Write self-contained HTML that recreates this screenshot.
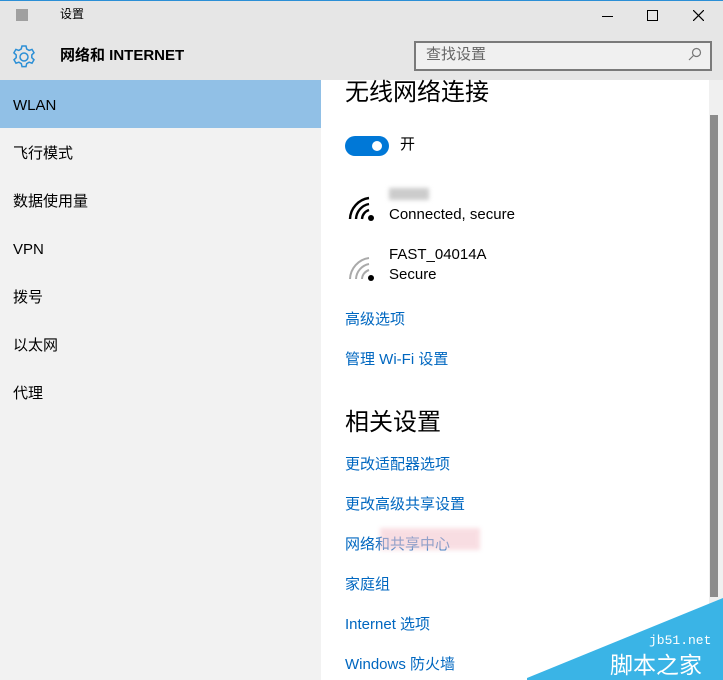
<html><head><style>
body{margin:0;width:723px;height:680px;overflow:hidden;font-family:"Liberation Sans","Noto Sans CJK SC",sans-serif;background:#fff;position:relative;line-height:1.45}
.a{position:absolute}
.nav{font-size:15px;color:#000;left:13px}
.lk{color:#0067c0;font-size:15px;left:345px}
</style></head><body>
<div class="a" style="left:0;top:0;width:723px;height:80px;background:#e6e6e6"></div>
<div class="a" style="left:0;top:0;width:723px;height:1px;background:#2b8fd6"></div>
<div class="a" style="left:16px;top:9px;width:12px;height:12px;background:#a0a0a0"></div>
<div class="a" style="left:60px;top:6px;font-size:12px">设置</div>
<div class="a" style="left:602px;top:16px;width:11px;height:1px;background:#000"></div>
<div class="a" style="left:647px;top:10px;width:9px;height:9px;border:1px solid #000"></div>
<svg class="a" style="left:693px;top:10px" width="11" height="11"><path d="M0 0L11 11M11 0L0 11" stroke="#000" stroke-width="1.2"/></svg>
<svg class="a" style="left:10px;top:43px" width="28" height="28" viewBox="0 0 28 28"><g fill="none" stroke="#2b8fd6" stroke-width="1.5"><circle cx="14" cy="14" r="4"/><path d="M12 3h4l.7 3 2.4 1.4 2.9-1 2 3.4-2.2 2.1v2.8l2.2 2.1-2 3.4-2.9-1-2.4 1.4-.7 3h-4l-.7-3-2.4-1.4-2.9 1-2-3.4 2.2-2.1v-2.8L3.9 9.8l2-3.4 2.9 1 2.4-1.4z"/></g></svg>
<div class="a" style="left:60px;top:45px;font-size:15px;font-weight:bold">网络和 INTERNET</div>
<div class="a" style="left:414px;top:41px;width:294px;height:26px;border:2px solid #7a7a7a;background:#f0f0f0"></div>
<div class="a" style="left:426px;top:44px;font-size:15px;color:#666">查找设置</div>
<svg class="a" style="left:688px;top:47px" width="14" height="14"><circle cx="8.5" cy="5.5" r="4" fill="none" stroke="#777" stroke-width="1.2"/><path d="M5.5 8.5L1 13" stroke="#777" stroke-width="1.2"/></svg>
<div class="a" style="left:0;top:80px;width:321px;height:600px;background:#f2f2f2"></div>
<div class="a" style="left:0;top:80px;width:321px;height:48px;background:#91c0e6"></div>
<div class="a nav" style="top:95px">WLAN</div>
<div class="a nav" style="top:143px">飞行模式</div>
<div class="a nav" style="top:191px">数据使用量</div>
<div class="a nav" style="top:239px">VPN</div>
<div class="a nav" style="top:287px">拨号</div>
<div class="a nav" style="top:335px">以太网</div>
<div class="a nav" style="top:383px">代理</div>
<div class="a" style="left:345px;top:76px;font-size:24px">无线网络连接</div>
<div class="a" style="left:345px;top:136px;width:44px;height:20px;border-radius:10px;background:#0078d7"></div>
<div class="a" style="left:372px;top:141px;width:10px;height:10px;border-radius:5px;background:#fff"></div>
<div class="a" style="left:400px;top:134px;font-size:15px">开</div>
<svg class="a" style="left:347px;top:192px" width="30" height="30" viewBox="0 0 30 30"><g fill="none" stroke="#000" stroke-width="2.4"><path d="M3 27 A22 22 0 0 1 22 6"/><path d="M9 27 A16 16 0 0 1 22 12"/><path d="M15 27 A10 10 0 0 1 22 18"/></g><circle cx="24" cy="26" r="3" fill="#000"/></svg>
<div class="a" style="left:389px;top:188px;width:40px;height:12px;background:#ccc;filter:blur(2px)"></div>
<div class="a" style="left:389px;top:204px;font-size:15px">Connected, secure</div>
<svg class="a" style="left:347px;top:252px" width="30" height="30" viewBox="0 0 30 30"><g fill="none" stroke="#aaa" stroke-width="2"><path d="M3 27 A22 22 0 0 1 22 6"/><path d="M9 27 A16 16 0 0 1 22 12"/><path d="M15 27 A10 10 0 0 1 22 18"/></g><circle cx="24" cy="26" r="3" fill="#000"/></svg>
<div class="a" style="left:389px;top:244px;font-size:15px">FAST_04014A</div>
<div class="a" style="left:389px;top:264px;font-size:15px">Secure</div>
<div class="a lk" style="top:309px">高级选项</div>
<div class="a lk" style="top:349px">管理 Wi-Fi 设置</div>
<div class="a" style="left:345px;top:406px;font-size:24px">相关设置</div>
<div class="a lk" style="top:454px">更改适配器选项</div>
<div class="a lk" style="top:494px">更改高级共享设置</div>
<div class="a lk" style="top:534px">网络和共享中心</div>
<div class="a" style="left:380px;top:528px;width:100px;height:22px;background:#f5c8d0;opacity:.6;filter:blur(2px)"></div>
<div class="a lk" style="top:574px">家庭组</div>
<div class="a lk" style="top:614px">Internet 选项</div>
<div class="a lk" style="top:654px">Windows 防火墙</div>
<div class="a" style="left:709px;top:80px;width:14px;height:600px;background:#f0f0f0"></div>
<div class="a" style="left:710px;top:115px;width:8px;height:482px;background:#8c8c8c"></div>
<svg class="a" style="left:0;top:0" width="723" height="680"><polygon points="527,678 723,598 723,680 527,680" fill="#3ab4e6"/></svg>
<div class="a" style="left:649px;top:633px;font-size:13px;line-height:16px;color:#fff;font-family:'Liberation Mono',monospace">jb51.net</div>
<div class="a" style="left:610px;top:652px;font-size:23px;line-height:26px;color:#fff">脚本之家</div>
</body></html>
